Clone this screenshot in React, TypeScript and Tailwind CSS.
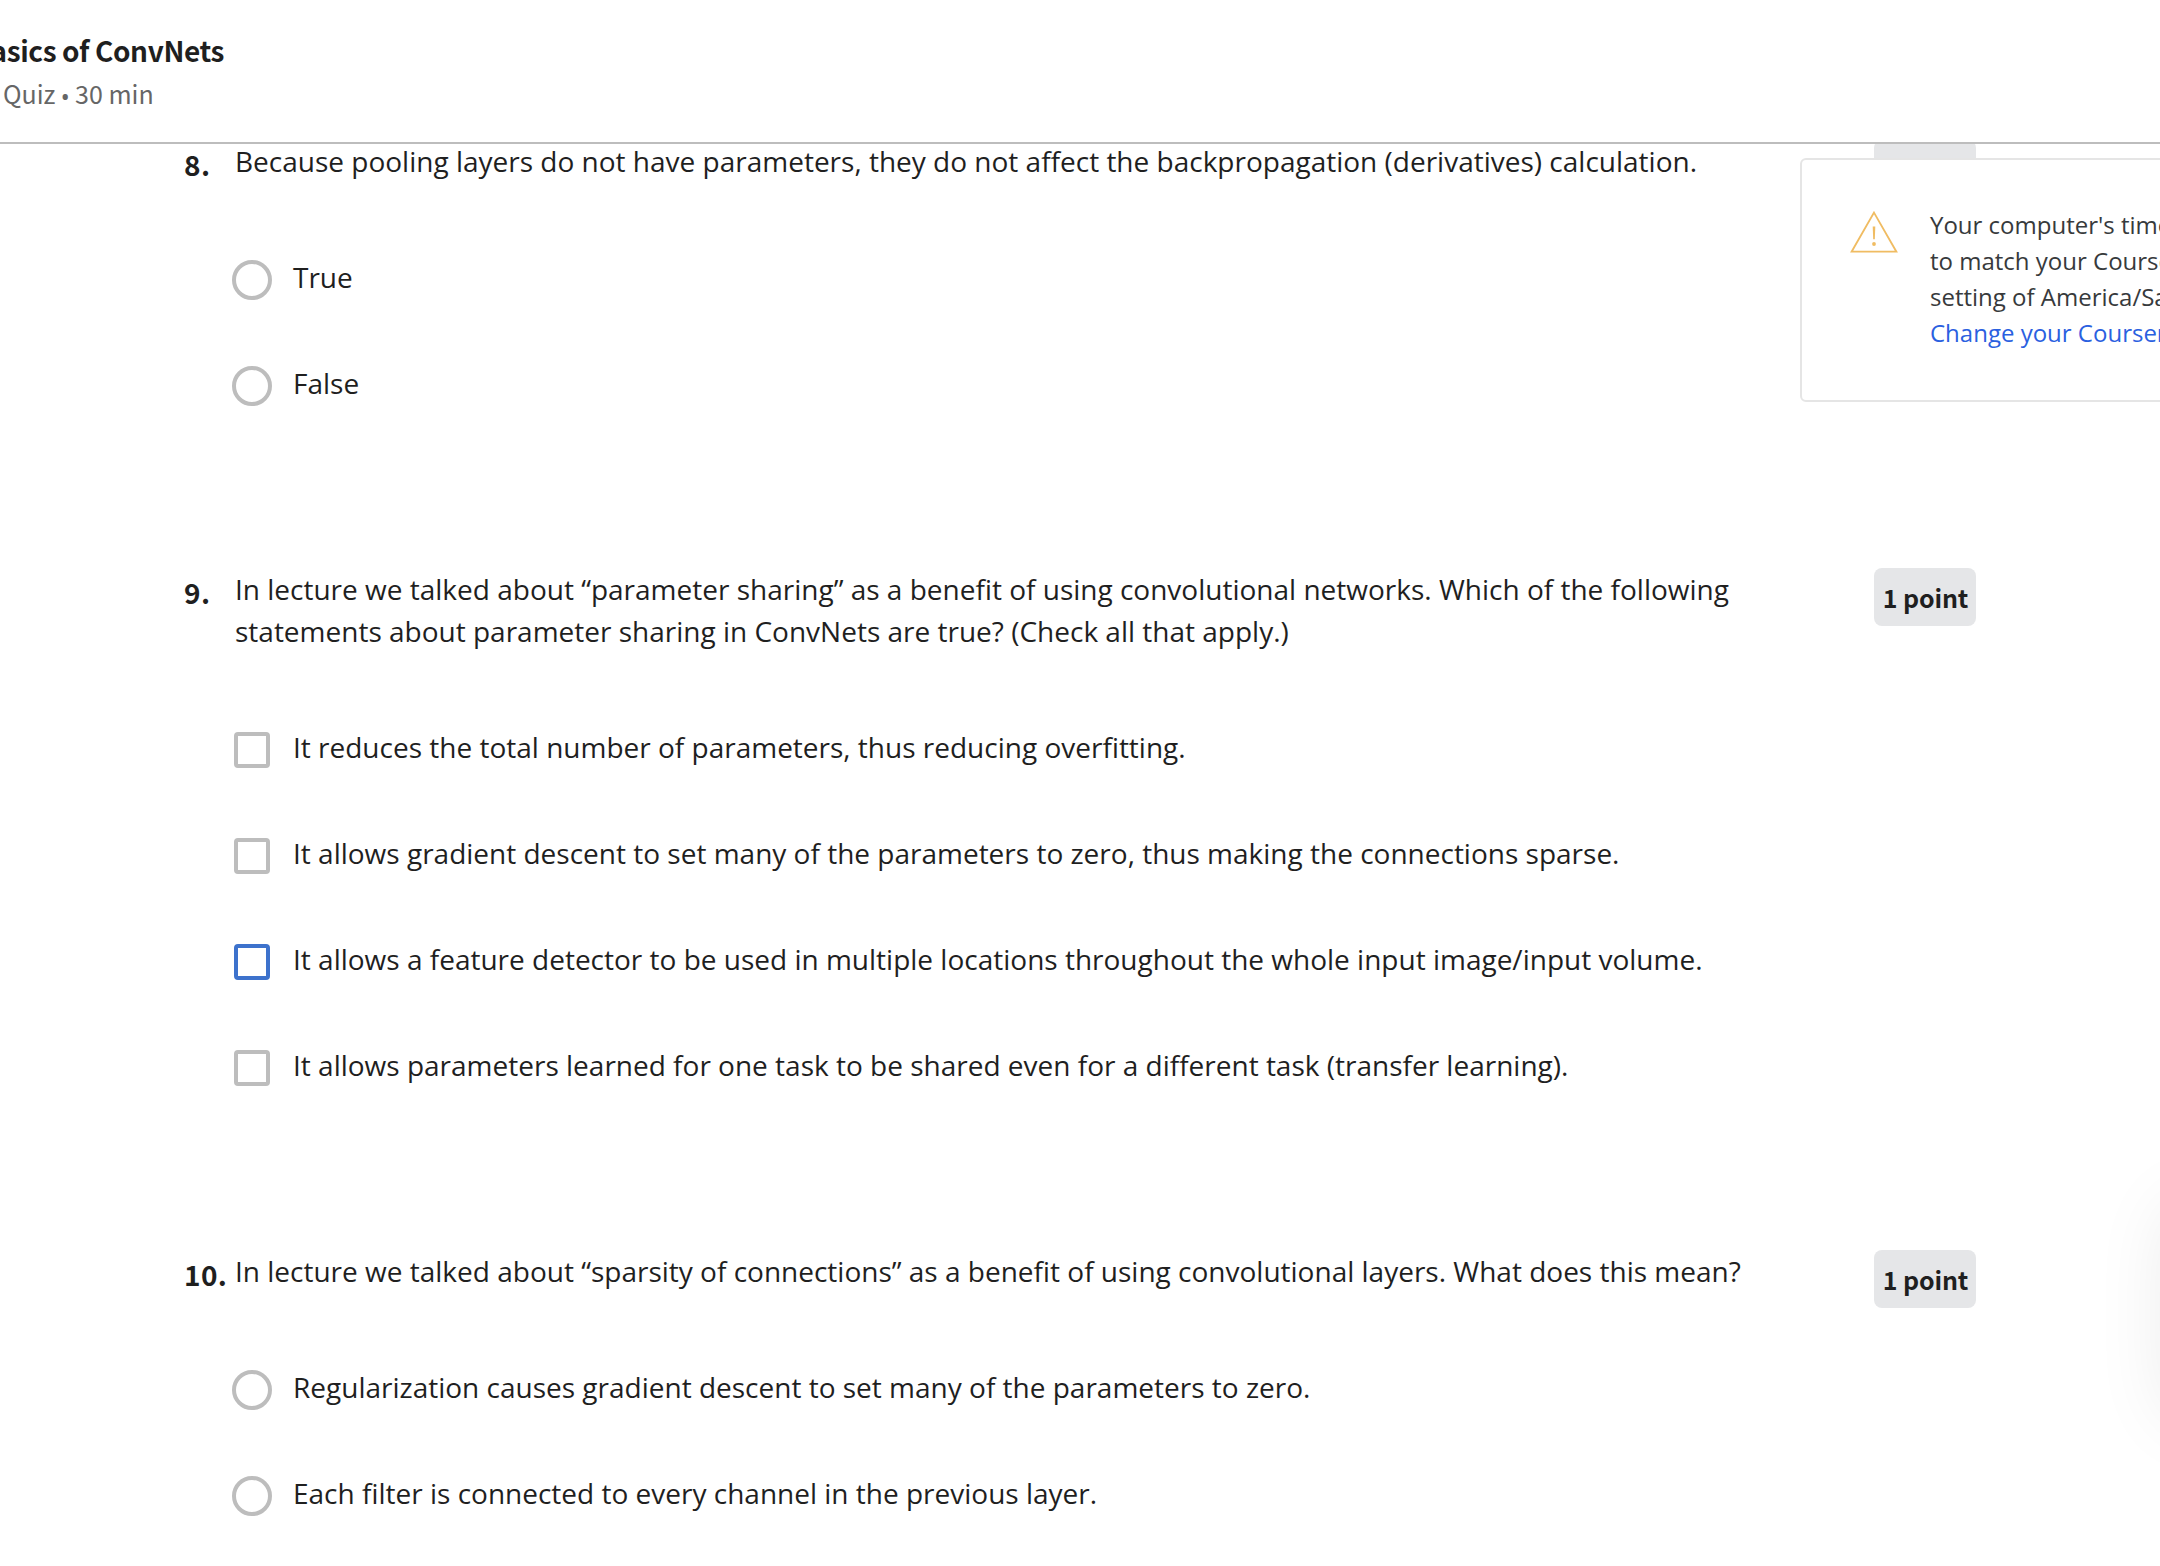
type Option = { label: string; active?: boolean };
type QuestionData = {
  number: string;
  prompt: string[];
  kind: "radio" | "checkbox";
  options: Option[];
};

const questions: QuestionData[] = [
  {
    number: "8.",
    prompt: [
      "Because pooling layers do not have parameters, they do not affect the backpropagation (derivatives) calculation.",
    ],
    kind: "radio",
    options: [{ label: "True" }, { label: "False" }],
  },
  {
    number: "9.",
    prompt: [
      "In lecture we talked about “parameter sharing” as a benefit of using convolutional networks. Which of the following",
      "statements about parameter sharing in ConvNets are true? (Check all that apply.)",
    ],
    kind: "checkbox",
    options: [
      { label: "It reduces the total number of parameters, thus reducing overfitting." },
      { label: "It allows gradient descent to set many of the parameters to zero, thus making the connections sparse." },
      {
        label: "It allows a feature detector to be used in multiple locations throughout the whole input image/input volume.",
        active: true,
      },
      { label: "It allows parameters learned for one task to be shared even for a different task (transfer learning)." },
    ],
  },
  {
    number: "10.",
    prompt: [
      "In lecture we talked about “sparsity of connections” as a benefit of using convolutional layers. What does this mean?",
    ],
    kind: "radio",
    options: [
      { label: "Regularization causes gradient descent to set many of the parameters to zero." },
      { label: "Each filter is connected to every channel in the previous layer." },
    ],
  },
];

function Control({ kind, active }: { kind: "radio" | "checkbox"; active?: boolean }) {
  if (kind === "radio") {
    return <span className="mt-1 ml-[-2px] mr-[-2px] size-10 shrink-0 rounded-full border-4 border-[#bdbdbd]" />;
  }
  return (
    <span
      className={
        active
          ? "mt-1.5 size-9 shrink-0 rounded-[4px] border-4 border-[#3d72cc]"
          : "mt-1.5 size-9 shrink-0 rounded-[4px] border-4 border-[#bdbdbd]"
      }
    />
  );
}

function Question({ q }: { q: QuestionData }) {
  return (
    <section className="flex items-start pl-[184px]">
      <div className="w-[50px] shrink-0 pt-[3px] font-['Noto_Sans_CJK_SC',sans-serif] text-[28px] leading-[42px] font-bold tracking-[0.4px] whitespace-nowrap">
        {q.number}
      </div>
      <div className="w-[1640px] shrink-0">
        <div className="pl-px whitespace-nowrap">
          {q.prompt.map((line) => (
            <p key={line}>{line}</p>
          ))}
        </div>
        <ul className="mt-[74px] flex flex-col gap-16">
          {q.options.map((o) => (
            <li key={o.label} className="flex h-[42px] items-start gap-[23px] whitespace-nowrap">
              <Control kind={q.kind} active={o.active} />
              <span>{o.label}</span>
            </li>
          ))}
        </ul>
      </div>
      <div className="flex h-[58px] w-[102px] shrink-0 items-center justify-center rounded-lg bg-[#e5e6e8] pl-px font-['Noto_Sans_CJK_SC',sans-serif] text-[25px] leading-[42px] font-bold tracking-[-0.1px] whitespace-nowrap">
        1 point
      </div>
    </section>
  );
}

function TimezoneNotice() {
  return (
    <aside className="absolute top-[158px] left-[1800px] flex h-[244px] w-[700px] rounded-md border-2 border-[#e5e5e5] bg-white pt-[47px] pl-12 text-2xl leading-9 text-[#373a3c]">
      <svg className="mt-[3px] h-12 w-12 shrink-0" viewBox="0 0 48 48" fill="none">
        <path d="M24 2.6 46.4 41.7H1.6Z" stroke="#f0bc62" strokeWidth="1.8" />
        <path d="M22.7 16.4h2.6l-.5 12.8h-1.6Z" fill="#f0bc62" />
        <circle cx="24" cy="34" r="1.9" fill="#f0bc62" />
      </svg>
      <div className="ml-8 whitespace-nowrap">
        <p>Your computer's timezone does not seem</p>
        <p>to match your Coursera account's timezone</p>
        <p>setting of America/Sao_Paulo.</p>
        <p className="text-[#2a60e0]">Change your Coursera timezone setting</p>
      </div>
    </aside>
  );
}

export default function App() {
  return (
    <div className="relative h-[1566px] w-[2160px] overflow-hidden bg-white font-['Open_Sans',sans-serif] text-[28px] leading-[42px] text-[#1f1f1f]">
      <header className="relative z-10 h-36 border-b-2 border-[#bdbdbd] bg-white pt-7 font-['Noto_Sans_CJK_SC',sans-serif]">
        <h1 className="flex w-[224px] justify-end text-[28px] leading-[44px] font-semibold tracking-[-0.4px] whitespace-nowrap">
          Basics of ConvNets
        </h1>
        <p className="pl-[3px] text-[25px] leading-[42px] whitespace-nowrap text-[#666]">
          Quiz{" "}
          <span className="mx-[-0.5px] inline-block translate-y-[2px] font-['Open_Sans',sans-serif]">•</span> 30 min
        </p>
      </header>
      <main className="-mt-1 flex flex-col gap-[164px]">
        {questions.map((q) => (
          <Question key={q.number} q={q} />
        ))}
      </main>
      <TimezoneNotice />
      <div className="absolute top-[1202px] left-[2164px] h-[220px] w-[200px] rounded-[32px] bg-white shadow-[0_0_72px_rgba(0,0,0,0.08)]" />
    </div>
  );
}
